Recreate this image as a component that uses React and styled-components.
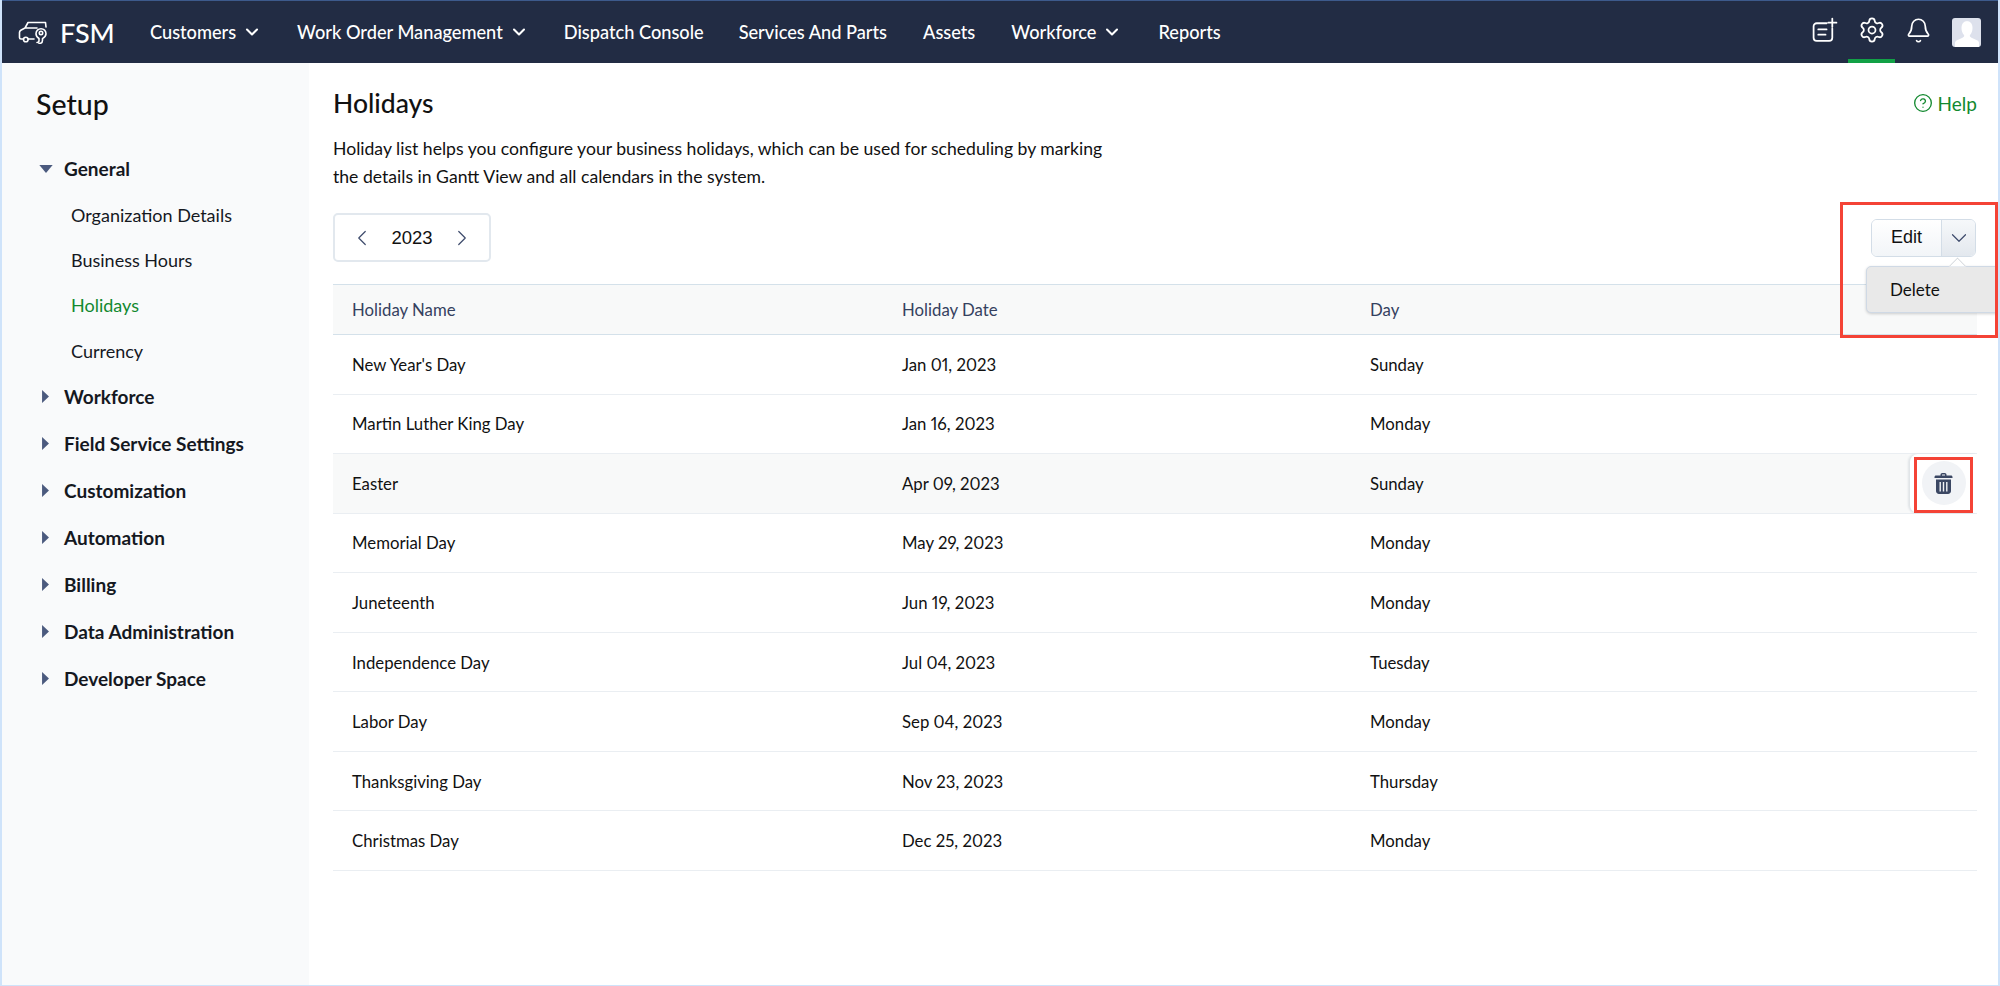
import styled, { createGlobalStyle } from 'styled-components';
import { Bell, ChevronDown, ChevronLeft, ChevronRight, CircleHelp, Settings } from 'lucide-react';

const GlobalStyle = createGlobalStyle`
  html, body { margin: 0; height: 100%; overflow: hidden; }
  body { font-family: Lato, "Open Sans", sans-serif; color: #111; background: #fff; }
  * { box-sizing: border-box; }
`;

const Page = styled.div`
  height: 986px;
  display: flex;
  flex-direction: column;
  border-left: 2px solid #cfe3fa;
  border-right: 2px solid #cfe3fa;
  border-bottom: 1px solid #cfe3fa;
  overflow: hidden;
`;

const TopBar = styled.header`
  height: 63px;
  flex: none;
  display: flex;
  align-items: stretch;
  background: #222c44;
  color: #fff;
  border-top: 1px solid #3d5a8c;
  margin: 0 -2px;
`;

const Brand = styled.div`
  width: 150px;
  padding-left: 18px;
  display: flex;
  align-items: center;
  gap: 12px;
  font-size: 27px;
  font-weight: 500;
`;

const NavLink = styled.div`
  display: flex;
  align-items: center;
  gap: 6px;
  margin-right: ${(p) => p.$gap}px;
  font-size: 18.2px;
  font-weight: 500;
`;

const NavIcons = styled.div`
  margin-left: auto;
  display: flex;
  align-items: center;
  padding-right: 19px;
`;

const NavIcon = styled.div`
  width: 47px;
  height: 100%;
  display: flex;
  align-items: center;
  justify-content: center;
  border-bottom: 4px solid ${(p) => (p.$active ? '#12a146' : 'transparent')};
`;

const Avatar = styled.div`
  width: 29px;
  height: 29px;
  margin-left: 10px;
  border-radius: 3px;
  overflow: hidden;
  background: #dde1ec;
  display: flex;
`;

const Body = styled.div`
  flex: 1;
  display: flex;
  min-height: 0;
`;

const Sidebar = styled.aside`
  width: 307px;
  flex: none;
  background: #f9fafb;
  padding: 21px 0 0 34px;
`;

const SetupTitle = styled.h2`
  margin: 0 0 21px;
  font-size: 28.5px;
  line-height: 40px;
  font-weight: 500;
`;

const Section = styled.div`
  height: 47px;
  display: flex;
  align-items: center;
  font-size: 19px;
  font-weight: 700;
  color: #15181f;
`;

const Caret = styled.span`
  width: 19px;
  margin-right: 9px;
  flex: none;
  display: flex;
  align-items: center;
  justify-content: center;
`;

const SubItem = styled.div`
  height: 45.3px;
  display: flex;
  align-items: center;
  padding-left: 35px;
  font-size: 18px;
  color: ${(p) => (p.$active ? '#12892f' : '#15181f')};
`;

const Main = styled.main`
  flex: 1;
  min-width: 0;
  position: relative;
  padding: 22px 21px 0 24px;
`;

const TitleRow = styled.div`
  display: flex;
  justify-content: space-between;
  align-items: center;
  height: 36px;
`;

const Title = styled.h1`
  margin: 0;
  font-size: 26.5px;
  font-weight: 500;
`;

const Help = styled.div`
  display: flex;
  align-items: center;
  gap: 5px;
  font-size: 19px;
  color: #12892f;
`;

const Description = styled.p`
  margin: 14px 0 0;
  width: 790px;
  font-size: 17.6px;
  line-height: 28px;
`;

const Toolbar = styled.div`
  margin-top: 22px;
  height: 49px;
  display: flex;
  justify-content: space-between;
  align-items: center;
`;

const YearPicker = styled.div`
  width: 158px;
  height: 49px;
  display: flex;
  align-items: center;
  justify-content: space-between;
  padding: 0 14px;
  border: 2px solid #e2e8ee;
  border-radius: 5px;
  font-family: "Liberation Sans", Arial, sans-serif;
  font-size: 18.5px;
`;

const SplitButton = styled.div`
  width: 105px;
  height: 38px;
  margin-right: 1px;
  display: flex;
  border: 1px solid #d3dde7;
  border-radius: 6px;
  overflow: hidden;
  font-family: "Liberation Sans", Arial, sans-serif;
  font-size: 18px;
`;

const EditPart = styled.div`
  width: 70px;
  display: flex;
  align-items: center;
  justify-content: center;
  background: linear-gradient(#fff, #f2f5f8);
  border-right: 1px solid #d3dde7;
`;

const ArrowPart = styled.div`
  flex: 1;
  display: flex;
  align-items: center;
  justify-content: center;
  background: linear-gradient(#f6f8fa, #e3e8ee);
  color: #3d4a6b;
`;

const Dropdown = styled.div`
  position: absolute;
  top: 203px;
  right: -10px;
  width: 142px;
  height: 47px;
  display: flex;
  align-items: center;
  padding-left: 23px;
  background: #e9e9e9;
  border: 1px solid #cfd9e5;
  border-radius: 5px;
  box-shadow: 0 1px 3px rgba(0, 0, 0, 0.18);
  font-size: 17px;
  z-index: 2;

  &::before {
    content: '';
    position: absolute;
    top: -7px;
    left: 84px;
    width: 12px;
    height: 12px;
    background: #fff;
    border-top: 1px solid #cfd3d8;
    border-left: 1px solid #cfd3d8;
    transform: rotate(45deg);
    clip-path: polygon(0 0, 100% 0, 0 100%);
  }
`;

const Callout = styled.div`
  position: absolute;
  top: ${(p) => p.$top}px;
  right: ${(p) => p.$right}px;
  width: ${(p) => p.$width}px;
  height: ${(p) => p.$height}px;
  border: 3px solid #f44336;
  z-index: 3;
  pointer-events: none;
`;

const Table = styled.div`
  margin-top: 22px;
`;

const gridRow = `
  display: grid;
  grid-template-columns: 550px 468px 1fr;
  padding-left: 19px;
  align-items: center;
  font-size: 16.75px;
  font-variant-numeric: proportional-nums;
`;

const HeaderRow = styled.div`
  ${gridRow}
  height: 51px;
  background: #f8f9f9;
  border-top: 1px solid #d4e1ea;
  border-bottom: 1px solid #d4e1ea;
  color: #35415f;
`;

const Row = styled.div`
  ${gridRow}
  position: relative;
  height: 59.55px;
  border-bottom: 1px solid #eaeef2;
  background: ${(p) => (p.$hover ? '#f8f9f9' : '#fff')};
`;

const RowAction = styled.div`
  position: absolute;
  right: 0;
  top: 0;
  bottom: 0;
  width: 67px;
  display: flex;
  align-items: center;
  justify-content: center;
  background: #fff;
  border-radius: 8px 0 0 8px;
  box-shadow: -2px 0 2px rgba(60, 80, 110, 0.12);
`;

const RoundIcon = styled.div`
  width: 44px;
  height: 44px;
  border-radius: 50%;
  background: #f1f3f6;
  display: flex;
  align-items: center;
  justify-content: center;
`;

function VanIcon() {
  return (
    <svg width="30" height="24" viewBox="0 0 30 24" fill="none" stroke="#fff" strokeWidth="1.6" strokeLinejoin="round" strokeLinecap="round">
      <path d="M7 8 10 2.500h17.500L28 7M5.500 19H3c-1 0-1.500-.6-1.500-1.500v-5c0-1 .5-1.800 1.300-2.300L7 8h12" />
      <path d="M10 19h6" />
      <circle cx="7.800" cy="19.500" r="2.300" />
      <path d="M19 22.500c1.500 0 2-1 2-2v-2c-1.500-1-3-2.600-3-4.800a5 5 0 0 1 10 0c0 2.400-2 4-3.500 5v1.500c0 2-1.500 3.300-3.500 3.300" />
      <circle cx="23" cy="13" r="1.700" />
    </svg>
  );
}

function AddNoteIcon() {
  return (
    <svg width="27" height="26" viewBox="0 0 26 25" fill="none" stroke="#fff" strokeWidth="1.7" strokeLinecap="round">
      <path d="M15 6H5.500A3 3 0 0 0 2.500 9v11a3 3 0 0 0 3 3h12a3 3 0 0 0 3-3V11" />
      <path d="M7 12h8M7 17h7M20.500 1.500v8M16.500 5.500h8" />
    </svg>
  );
}

function AvatarFigure() {
  return (
    <svg width="29" height="29" viewBox="0 0 29 29">
      <path fill="#fff" d="M14.500 3c4 0 6 3 6 7 0 3-1 5.500-2.500 7-.6 1 0 2 1.500 2.700l6 2.800c1 .5 1.500 1.500 1.500 3V29H3v-3.500c0-1.500.5-2.500 1.500-3l6-2.800c1.500-.7 2.100-1.700 1.500-2.700-1.500-1.500-2.500-4-2.500-7 0-4 2-7 6-7z" />
    </svg>
  );
}

function TrashIcon() {
  return (
    <svg width="19" height="21" viewBox="0 0 19 21" fill="#3b4763">
      <path d="M6.500 2.500V1.800C6.500.8 7.300 0 8.300 0h2.400c1 0 1.800.8 1.800 1.800v.7H17c.8 0 1.500.7 1.500 1.500V5H.5V4c0-.8.7-1.500 1.500-1.500h4.500zM8 1.500v1h3v-1H8z" />
      <path fillRule="evenodd" d="M2 6.500h15V18c0 1.600-1.300 3-3 3H5c-1.700 0-3-1.400-3-3V6.500zM5.500 9v9.500h1.400V9H5.500zm3.300 0v9.500h1.400V9H8.800zm3.300 0v9.500h1.400V9h-1.400z" />
    </svg>
  );
}

function CaretIcon({ open }) {
  return open ? (
    <svg width="14" height="8" viewBox="0 0 15 9"><path d="M0 0h15L7.500 9z" fill="#4b5a7e" /></svg>
  ) : (
    <svg width="7" height="13" viewBox="0 0 8 15"><path d="M0 0l8 7.500L0 15z" fill="#4b5a7e" /></svg>
  );
}

const navLinks = [
  { label: 'Customers', caret: true, gap: 35 },
  { label: 'Work Order Management', caret: true, gap: 35 },
  { label: 'Dispatch Console', gap: 35 },
  { label: 'Services And Parts', gap: 36 },
  { label: 'Assets', gap: 36 },
  { label: 'Workforce', caret: true, gap: 36 },
  { label: 'Reports', gap: 0 },
];

const sections = ['Workforce', 'Field Service Settings', 'Customization', 'Automation', 'Billing', 'Data Administration', 'Developer Space'];

const holidays = [
  ["New Year's Day", 'Jan 01, 2023', 'Sunday'],
  ['Martin Luther King Day', 'Jan 16, 2023', 'Monday'],
  ['Easter', 'Apr 09, 2023', 'Sunday'],
  ['Memorial Day', 'May 29, 2023', 'Monday'],
  ['Juneteenth', 'Jun 19, 2023', 'Monday'],
  ['Independence Day', 'Jul 04, 2023', 'Tuesday'],
  ['Labor Day', 'Sep 04, 2023', 'Monday'],
  ['Thanksgiving Day', 'Nov 23, 2023', 'Thursday'],
  ['Christmas Day', 'Dec 25, 2023', 'Monday'],
];

export default function App() {
  return (
    <Page>
      <GlobalStyle />
      <TopBar>
        <Brand>
          <VanIcon />
          FSM
        </Brand>
        {navLinks.map((link) => (
          <NavLink key={link.label} $gap={link.gap}>
            {link.label}
            {link.caret && <ChevronDown size={20} strokeWidth={2.5} />}
          </NavLink>
        ))}
        <NavIcons>
          <NavIcon><AddNoteIcon /></NavIcon>
          <NavIcon $active><Settings size={28} strokeWidth={1.5} /></NavIcon>
          <NavIcon><Bell size={27} strokeWidth={1.5} /></NavIcon>
          <Avatar><AvatarFigure /></Avatar>
        </NavIcons>
      </TopBar>
      <Body>
        <Sidebar>
          <SetupTitle>Setup</SetupTitle>
          <Section><Caret><CaretIcon open /></Caret>General</Section>
          <SubItem>Organization Details</SubItem>
          <SubItem>Business Hours</SubItem>
          <SubItem $active>Holidays</SubItem>
          <SubItem>Currency</SubItem>
          {sections.map((name) => (
            <Section key={name}><Caret><CaretIcon /></Caret>{name}</Section>
          ))}
        </Sidebar>
        <Main>
          <TitleRow>
            <Title>Holidays</Title>
            <Help><CircleHelp size={20} strokeWidth={1.6} />Help</Help>
          </TitleRow>
          <Description>
            Holiday list helps you configure your business holidays, which can be used for scheduling by marking
            the details in Gantt View and all calendars in the system.
          </Description>
          <Toolbar>
            <YearPicker>
              <ChevronLeft size={26} strokeWidth={1.1} color="#3d4a6b" />
              2023
              <ChevronRight size={26} strokeWidth={1.1} color="#3d4a6b" />
            </YearPicker>
            <SplitButton>
              <EditPart>Edit</EditPart>
              <ArrowPart><ChevronDown size={26} strokeWidth={1.1} /></ArrowPart>
            </SplitButton>
          </Toolbar>
          <Dropdown>Delete</Dropdown>
          <Callout $top={139} $right={0} $width={158} $height={136} />
          <Callout $top={394} $right={25} $width={59} $height={56} />
          <Table>
            <HeaderRow>
              <span>Holiday Name</span>
              <span>Holiday Date</span>
              <span>Day</span>
            </HeaderRow>
            {holidays.map(([name, date, day]) => (
              <Row key={name} $hover={name === 'Easter'}>
                <span>{name}</span>
                <span>{date}</span>
                <span>{day}</span>
                {name === 'Easter' && (
                  <RowAction><RoundIcon><TrashIcon /></RoundIcon></RowAction>
                )}
              </Row>
            ))}
          </Table>
        </Main>
      </Body>
    </Page>
  );
}
